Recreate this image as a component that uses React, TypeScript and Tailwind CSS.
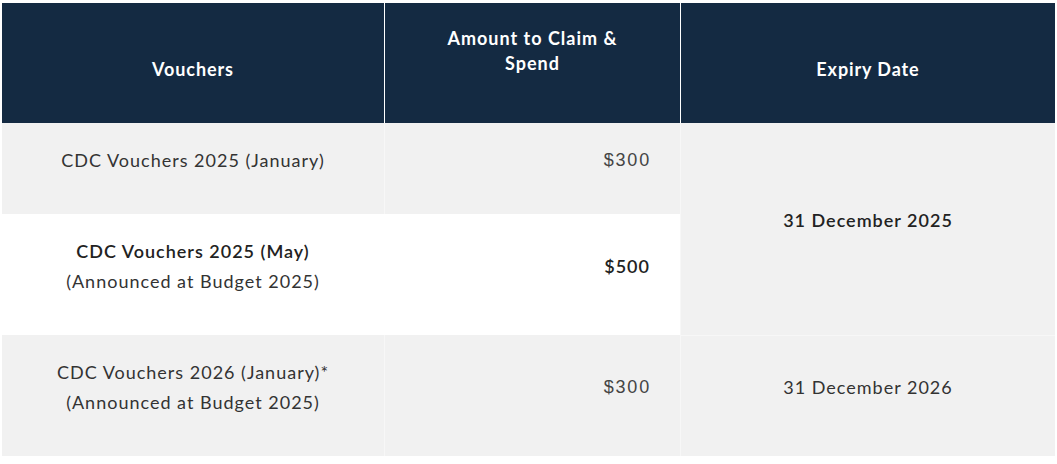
import React from 'react';

const body = "font-['Lato','Noto_Sans',sans-serif]";
const money = "font-['Liberation_Sans','Arial',sans-serif]";

export default function App() {
  return (
    <div className="w-[1057px] h-[464px] bg-white pl-[2px] pt-[3px]">
      <div className={`grid grid-cols-[382px_1px_295px_1px_374px] tracking-[1px] ${body}`}>
        {/* Header */}
        <div className="h-[120px] bg-[#142a42] flex items-center justify-center pt-3 text-white font-bold text-[18px] tracking-[0.9px]">
          Vouchers
        </div>
        <div className="bg-white" />
        <div className="h-[120px] bg-[#142a42] flex items-center justify-center pb-[24px] text-white font-bold text-[18px] leading-[25px] text-center tracking-[1px]">
          <div>
            Amount to Claim &amp;
            <br />
            Spend
          </div>
        </div>
        <div className="bg-white" />
        <div className="h-[120px] bg-[#142a42] flex items-center justify-center pt-3 text-white font-bold text-[18px] tracking-[0.9px]">
          Expiry Date
        </div>

        {/* Row 1 */}
        <div className="h-[91px] bg-[#f1f1f1] flex items-center justify-center pb-[17px] text-[18px] text-[#333] leading-[30px]">
          CDC Vouchers 2025 (January)
        </div>
        <div className="bg-[#f7f7f7]" />
        <div className={`h-[91px] bg-[#f1f1f1] flex items-center justify-end pr-[29px] pb-[17px] text-[18px] text-[#444] tracking-[1.8px] ${money}`}>
          $300
        </div>
        <div className="row-span-2 bg-[#f7f7f7]" />
        <div className="row-span-2 bg-[#f1f1f1] flex items-center justify-center pb-[17px] text-[18px] font-semibold text-[#222]">
          31 December 2025
        </div>

        {/* Row 2 */}
        <div className="h-[121px] bg-white flex flex-col items-center justify-center pb-[17px] text-[18px] text-[#333] leading-[30px] text-center">
          <span className="font-semibold text-[#222]">CDC Vouchers 2025 (May)</span>
          <span>(Announced at Budget 2025)</span>
        </div>
        <div className="bg-white" />
        <div className="h-[121px] bg-white flex items-center justify-end pr-[30px] pb-[17px] text-[18px] font-semibold text-[#222]">
          $500
        </div>

        {/* Row 3 */}
        <div className="h-[121px] bg-[#f1f1f1] flex flex-col items-center justify-center pb-[17px] text-[18px] text-[#333] leading-[30px] text-center">
          <span>CDC Vouchers 2026 (January)*</span>
          <span>(Announced at Budget 2025)</span>
        </div>
        <div className="bg-[#f7f7f7]" />
        <div className={`h-[121px] bg-[#f1f1f1] flex items-center justify-end pr-[29px] pb-[17px] text-[18px] text-[#444] tracking-[1.8px] ${money}`}>
          $300
        </div>
        <div className="bg-[#f7f7f7]" />
        <div className="h-[121px] bg-[#f1f1f1] border-t border-[#f7f7f7] flex items-center justify-center pb-[17px] text-[18px] text-[#333]">
          31 December 2026
        </div>
      </div>
    </div>
  );
}
